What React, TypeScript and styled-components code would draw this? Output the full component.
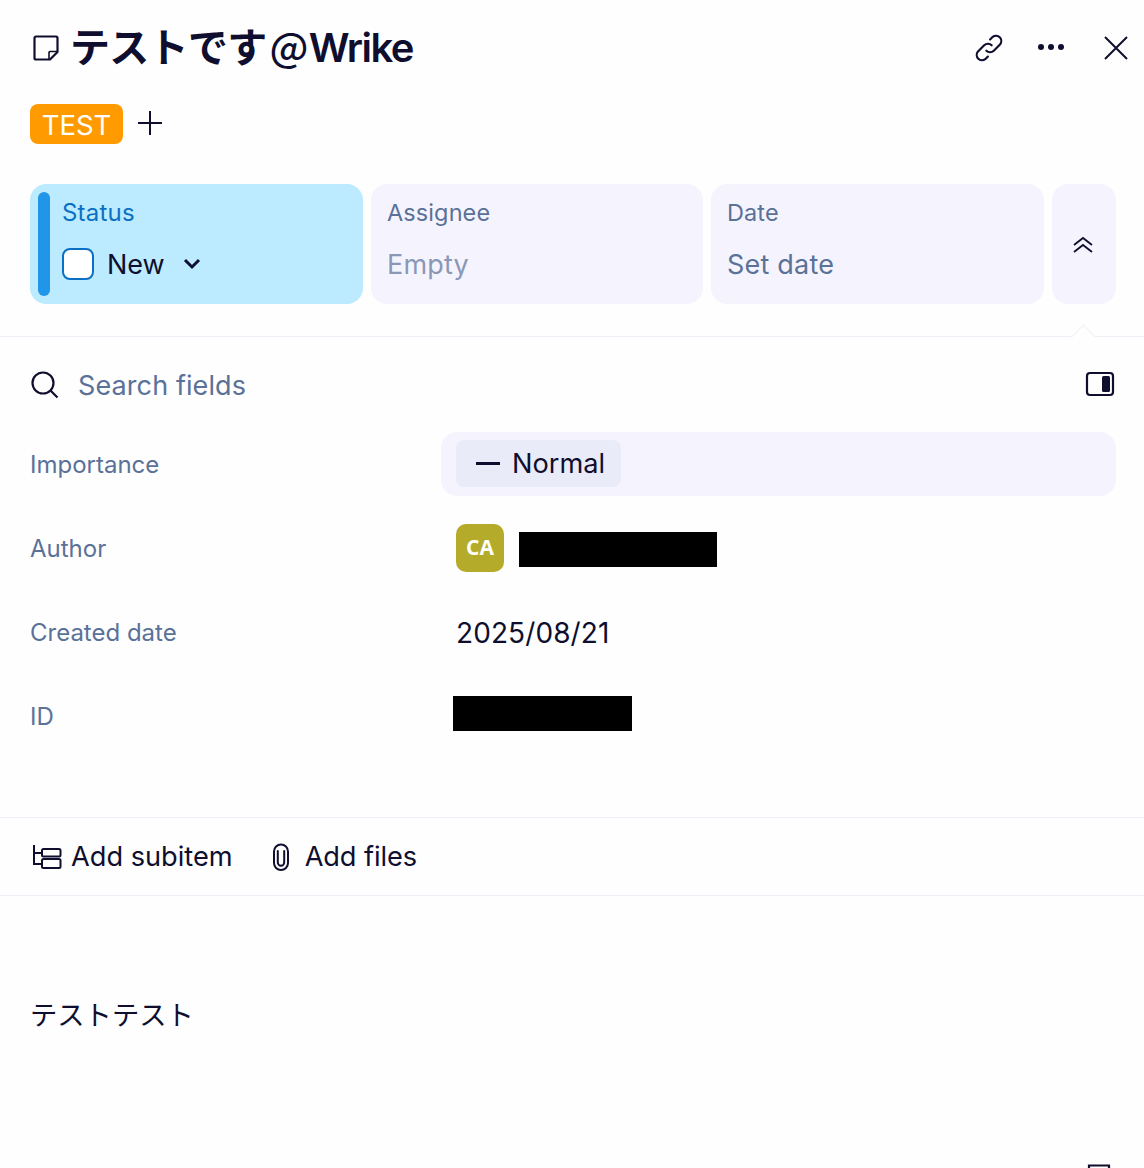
import styled, { createGlobalStyle } from "styled-components"

const GlobalStyle = createGlobalStyle`
  html, body {
    margin: 0;
    padding: 0;
    background: #fefefe;
  }
  * {
    box-sizing: border-box;
  }
`

type CardType = {
  label: string
  value: string
  muted?: boolean
}

type FieldRowType = {
  label: string
  children: React.ReactNode
}

const FieldRow = ({ label, children }: FieldRowType) => (
  <RowStyle>
    <RowLabel>{label}</RowLabel>
    <RowValue>{children}</RowValue>
  </RowStyle>
)

const SummaryCard = ({ label, value, muted }: CardType) => (
  <CardStyle>
    <CardLabel>{label}</CardLabel>
    <CardValue $muted={muted}>{value}</CardValue>
  </CardStyle>
)

export default function App() {
  return (
    <PageStyle>
      <GlobalStyle />
      <HeaderStyle>
        <TitleBox>
          <svg width="26" height="26" viewBox="0 0 26 26" fill="none" stroke="#0f0e2e" strokeWidth="2.2" strokeLinejoin="round">
            <path d="M3 1.500h20a1.500 1.500 0 0 1 1.500 1.500v14l-7.500 7.500H3A1.500 1.500 0 0 1 1.500 23V3A1.500 1.500 0 0 1 3 1.500z" />
            <path d="M24.500 16.500H17a1 1 0 0 0-1 1v7" strokeWidth="1.600" />
          </svg>
          <TitleStyle>テストです<AtSign>@</AtSign><BrandText>Wrike</BrandText></TitleStyle>
        </TitleBox>
        <HeaderIcons>
          <svg width="32" height="32" viewBox="0 0 30 30" fill="none" stroke="#0f0e2e" strokeWidth="2" strokeLinecap="round">
            <path d="M12.500 17.500a5 5 0 0 0 7 0l6-6a5 5 0 0 0-7-7l-2.500 2.500" />
            <path d="M17.500 12.500a5 5 0 0 0-7 0l-6 6a5 5 0 0 0 7 7l2.500-2.500" />
          </svg>
          <DotsIcon width="28" height="8" viewBox="0 0 28 8" fill="#0f0e2e">
            <circle cx="4" cy="4" r="3" />
            <circle cx="14" cy="4" r="3" />
            <circle cx="24" cy="4" r="3" />
          </DotsIcon>
          <svg width="24" height="24" viewBox="0 0 24 24" stroke="#0f0e2e" strokeWidth="2">
            <path d="M1 1l22 22M23 1L1 23" />
          </svg>
        </HeaderIcons>
      </HeaderStyle>

      <TagsStyle>
        <TagStyle>TEST</TagStyle>
        <PlusIcon width="24" height="24" viewBox="0 0 24 24" stroke="#0f0e2e" strokeWidth="2">
          <path d="M12 0v24M0 12h24" />
        </PlusIcon>
      </TagsStyle>

      <SummaryStyle>
        <CardsStyle>
          <StatusCard>
            <StatusBar />
            <StatusBody>
              <StatusLabel>Status</StatusLabel>
              <StatusValue>
                <StatusCheck />
                <StatusName>New</StatusName>
                <svg width="18" height="12" viewBox="0 0 18 12" fill="none" stroke="#0f0e2e" strokeWidth="3">
                  <path d="M2 2l7 7 7-7" />
                </svg>
              </StatusValue>
            </StatusBody>
          </StatusCard>
          <SummaryCard label="Assignee" value="Empty" muted />
          <SummaryCard label="Date" value="Set date" />
          <ToggleCard>
            <svg width="20" height="18" viewBox="0 0 20 18" fill="none" stroke="#0f0e2e" strokeWidth="1.800">
              <path d="M1 9l9-7 9 7M1 16l9-7 9 7" />
            </svg>
          </ToggleCard>
        </CardsStyle>
        <NotchStyle />
      </SummaryStyle>

      <SearchStyle>
        <SearchBox>
          <svg width="28" height="28" viewBox="0 0 28 28" fill="none" stroke="#0f0e2e" strokeWidth="2.200">
            <circle cx="12" cy="12" r="10.500" />
            <path d="M19.500 19.500l7 7" />
          </svg>
          <SearchText>Search fields</SearchText>
        </SearchBox>
        <PanelIcon width="30" height="26" viewBox="0 0 30 26">
          <rect x="2" y="2" width="26" height="22" rx="3" fill="none" stroke="#0f0e2e" strokeWidth="2.200" />
          <rect x="17" y="5" width="8" height="16" rx="1.500" fill="#0f0e2e" />
        </PanelIcon>
      </SearchStyle>

      <RowsStyle>
        <FieldRow label="Importance">
          <ImportanceField>
            <ChipStyle>
              <DashStyle />
              <NormalText>Normal</NormalText>
            </ChipStyle>
          </ImportanceField>
        </FieldRow>
        <FieldRow label="Author">
          <AvatarStyle>CA</AvatarStyle>
          <AuthorRedaction />
        </FieldRow>
        <FieldRow label="Created date">
          <DateText>2025/08/21</DateText>
        </FieldRow>
        <FieldRow label="ID">
          <IdRedaction />
        </FieldRow>
      </RowsStyle>

      <ActionsStyle>
        <ActionStyle>
          <svg width="30" height="24" viewBox="0 0 30 24" fill="none" stroke="#0f0e2e" strokeWidth="2">
            <path d="M2 0v19h7M2 8h7" />
            <rect x="10" y="4" width="18.500" height="7.500" rx="1.500" />
            <rect x="10" y="14" width="18.500" height="9" rx="1.500" />
          </svg>
          Add subitem
        </ActionStyle>
        <FilesAction>
          <svg width="18" height="28" viewBox="0 0 18 28" fill="none" stroke="#0f0e2e" strokeWidth="2" strokeLinecap="round">
            <path d="M2 19V8.500a7 7 0 0 1 14 0V20a7 7 0 0 1-14 0v-1" />
            <path d="M5.800 8v11.500a3.200 3.200 0 0 0 6.400 0V8" />
          </svg>
          Add files
        </FilesAction>
      </ActionsStyle>

      <DescriptionStyle>テストテスト</DescriptionStyle>

      <FooterStyle>
        <svg width="24" height="6" viewBox="0 0 24 6" fill="none" stroke="#0f0e2e" strokeWidth="2.200">
          <path d="M2 6V1.500h20V6" />
        </svg>
      </FooterStyle>
    </PageStyle>
  )
}

const PageStyle = styled.div`
  width: 1144px;
  height: 1168px;
  overflow: hidden;
  background: #fefefe;
  color: #0f0e2e;
  font-family: Inter, "Noto Sans CJK JP", sans-serif;
`

const HeaderStyle = styled.header`
  height: 96px;
  padding: 0 16px 0 33px;
  display: flex;
  align-items: center;
  justify-content: space-between;
`

const TitleBox = styled.div`
  display: flex;
  align-items: center;
  gap: 11px;
`

const TitleStyle = styled.h1`
  margin: 0 0 3px;
  font-size: 40px;
  line-height: 48px;
  font-weight: 600;
  letter-spacing: -0.7px;
`

const AtSign = styled.span`
  margin: 0 1px 0 3px;
  font-family: "Noto Sans CJK JP", sans-serif;
  font-weight: 500;
`

const BrandText = styled.span`
  letter-spacing: -1.5px;
`

const HeaderIcons = styled.div`
  display: flex;
  align-items: center;
  gap: 32px;
`

const DotsIcon = styled.svg`
  margin: 0 7px 2px 0;
`

const TagsStyle = styled.div`
  margin: 8px 0 40px 30px;
  display: flex;
  align-items: center;
  gap: 15px;
`

const TagStyle = styled.span`
  width: 93px;
  height: 40px;
  border-radius: 8px;
  background: #ff9b00;
  color: #fff;
  font-size: 27.5px;
  line-height: 42px;
  text-align: center;
`

const PlusIcon = styled.svg`
  margin-bottom: 2px;
`

const SummaryStyle = styled.section`
  position: relative;
  padding: 0 28px 32px 30px;
  border-bottom: 1px solid #f0f0f8;
`

const CardsStyle = styled.div`
  display: grid;
  grid-template-columns: 333px 332px 333px 64px;
  gap: 8px;
  height: 120px;
`

const CardStyle = styled.div`
  background: #f5f4fe;
  border-radius: 16px;
  padding: 14px 16px;
`

const CardLabel = styled.div`
  font-size: 23.5px;
  line-height: 30px;
  letter-spacing: 0.1px;
  color: #5a7198;
`

const CardValue = styled.div<{ $muted?: boolean }>`
  margin-top: 19px;
  font-size: 27px;
  line-height: 36px;
  letter-spacing: 0.2px;
  color: ${props => (props.$muted ? "#8a98b6" : "#5a7198")};
`

const StatusCard = styled.div`
  background: #bceaff;
  border-radius: 16px;
  padding: 8px 12px 8px 8px;
  display: flex;
  gap: 12px;
`

const StatusBar = styled.div`
  width: 12px;
  border-radius: 6px;
  background: #2196e8;
`

const StatusBody = styled.div`
  padding-top: 6px;
  flex: 1;
`

const StatusLabel = styled.div`
  font-size: 24px;
  line-height: 30px;
  color: #0a70c4;
  letter-spacing: 0.2px;
`

const StatusValue = styled.div`
  margin-top: 19px;
  display: flex;
  align-items: center;
`

const StatusCheck = styled.span`
  width: 32px;
  height: 32px;
  border-radius: 8px;
  border: 2px solid #0a70c4;
  background: #fff;
`

const StatusName = styled.span`
  margin: 0 18px 0 13px;
  padding-top: 2px;
  font-size: 27px;
  line-height: 32px;
`

const ToggleCard = styled(CardStyle)`
  padding: 2px 2px 0 0;
  display: flex;
  align-items: center;
  justify-content: center;
`

const NotchStyle = styled.span`
  position: absolute;
  right: 52px;
  bottom: -9px;
  width: 17px;
  height: 17px;
  background: #fefefe;
  border-top: 1px solid #f0f0f8;
  border-left: 1px solid #f0f0f8;
  transform: rotate(45deg);
`

const SearchStyle = styled.div`
  height: 48px;
  margin: 24px 29px 13px 31px;
  display: flex;
  align-items: center;
  justify-content: space-between;
`

const SearchBox = styled.div`
  display: flex;
  align-items: center;
  gap: 19px;
`

const SearchText = styled.span`
  padding-top: 2px;
  font-size: 27px;
  line-height: 36px;
  letter-spacing: 0.1px;
  color: #5a7198;
`

const PanelIcon = styled.svg`
  margin-bottom: 2px;
`

const RowsStyle = styled.div`
  padding: 0 28px 0 30px;
  margin-bottom: 59px;
`

const RowStyle = styled.div`
  height: 84px;
  display: grid;
  grid-template-columns: 411px 1fr;
  align-items: center;
`

const RowLabel = styled.div`
  padding-top: 2px;
  font-size: 24px;
  line-height: 30px;
  color: #5a7198;
`

const RowValue = styled.div`
  display: flex;
  align-items: center;
  padding-left: 15px;
  min-height: 64px;
`

const ImportanceField = styled.div`
  width: 675px;
  height: 64px;
  margin-left: -15px;
  padding: 8px 15px;
  background: #f5f4fe;
  border-radius: 16px;
`

const ChipStyle = styled.div`
  width: 165px;
  height: 47px;
  padding-left: 20px;
  background: #e9ebf8;
  border-radius: 8px;
  display: flex;
  align-items: center;
  gap: 12px;
`

const DashStyle = styled.span`
  width: 24px;
  height: 3px;
  margin-top: -1px;
  background: #0f0e2e;
`

const NormalText = styled.span`
  font-size: 27.2px;
  line-height: 36px;
`

const DateText = styled.span`
  font-size: 28px;
  line-height: 36px;
  letter-spacing: 0.1px;
  padding-top: 2px;
`

const AvatarStyle = styled.div`
  width: 48px;
  height: 48px;
  padding-bottom: 2px;
  border-radius: 10px;
  background: #b5ab2a;
  color: #fff;
  font-family: "Open Sans", sans-serif;
  font-size: 21px;
  font-weight: 700;
  display: flex;
  align-items: center;
  justify-content: center;
`

const AuthorRedaction = styled.div`
  width: 198px;
  height: 35px;
  margin: 2px 0 0 15px;
  background: #000;
`

const IdRedaction = styled.div`
  width: 179px;
  height: 35px;
  margin: -6px 0 0 -3px;
  background: #000;
`

const ActionsStyle = styled.div`
  height: 79px;
  padding: 0 0 0 32px;
  display: flex;
  align-items: center;
  gap: 39px;
  border-top: 1px solid #f0f0f8;
  border-bottom: 1px solid #f0f0f8;
`

const ActionStyle = styled.div`
  display: flex;
  align-items: center;
  gap: 9px;
  font-size: 27.2px;
  line-height: 36px;
`

const FilesAction = styled(ActionStyle)`
  gap: 15px;
  letter-spacing: -0.1px;
`

const DescriptionStyle = styled.div`
  height: 268px;
  padding: 100px 30px 0;
  font-size: 27.3px;
  line-height: 40px;
`

const FooterStyle = styled.div`
  display: flex;
  justify-content: flex-end;
  padding-right: 33px;
`
